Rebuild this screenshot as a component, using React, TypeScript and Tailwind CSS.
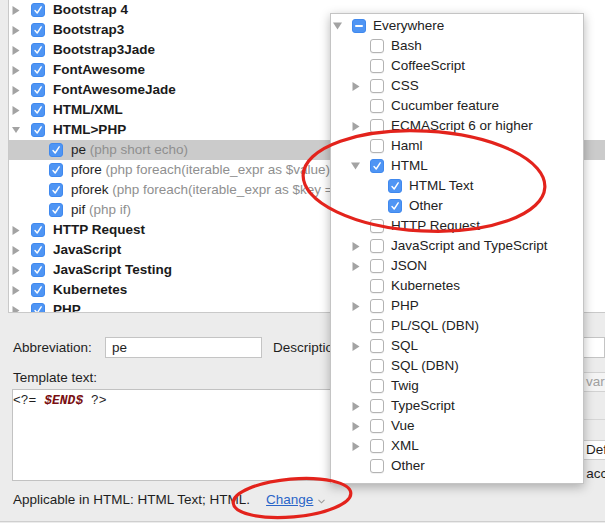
import React from "react";

type Arrow = "right" | "down" | null;

function ArrowIcon({ dir }: { dir: Arrow }) {
  if (dir === "right")
    return (
      <svg width="8" height="9" viewBox="0 0 8 9">
        <polygon points="0.5,0 7.5,4.5 0.5,9" fill="#a3a3a3" />
      </svg>
    );
  if (dir === "down")
    return (
      <svg width="9" height="8" viewBox="0 0 9 8">
        <polygon points="0,0.5 9,0.5 4.5,7.5" fill="#a3a3a3" />
      </svg>
    );
  return null;
}

function Check({ state }: { state: "on" | "off" | "mixed" }) {
  if (state === "off")
    return (
      <span className="block w-[14px] h-[14px] rounded-[3px] border border-[#b3b3b3] bg-white shadow-[0_1px_0_rgba(0,0,0,0.05)]" />
    );
  return (
    <span className="flex items-center justify-center w-[14px] h-[14px] rounded-[3px] bg-[#4f95f4] border border-[#4089ee]">
      {state === "on" ? (
        <svg width="12" height="12" viewBox="0 0 12 12">
          <polyline points="3,6.5 5.2,9 9.2,2.8" fill="none" stroke="#fff" strokeWidth="1.4" strokeLinecap="round" strokeLinejoin="round" />
        </svg>
      ) : (
        <span className="block w-[8px] h-[2px] bg-white rounded-[1px]" />
      )}
    </span>
  );
}

type TreeItem = { label: string; desc?: string; arrow: Arrow; level: number; selected?: boolean };

const tree: TreeItem[] = [
  { label: "Bootstrap 4", arrow: "right", level: 0 },
  { label: "Bootstrap3", arrow: "right", level: 0 },
  { label: "Bootstrap3Jade", arrow: "right", level: 0 },
  { label: "FontAwesome", arrow: "right", level: 0 },
  { label: "FontAwesomeJade", arrow: "right", level: 0 },
  { label: "HTML/XML", arrow: "right", level: 0 },
  { label: "HTML>PHP", arrow: "down", level: 0 },
  { label: "pe", desc: "(php short echo)", arrow: null, level: 1, selected: true },
  { label: "pfore", desc: "(php foreach(iterable_expr as $value))", arrow: null, level: 1 },
  { label: "pforek", desc: "(php foreach(iterable_expr as $key => $value))", arrow: null, level: 1 },
  { label: "pif", desc: "(php if)", arrow: null, level: 1 },
  { label: "HTTP Request", arrow: "right", level: 0 },
  { label: "JavaScript", arrow: "right", level: 0 },
  { label: "JavaScript Testing", arrow: "right", level: 0 },
  { label: "Kubernetes", arrow: "right", level: 0 },
  { label: "PHP", arrow: "right", level: 0 },
];

type PopItem = { label: string; arrow: Arrow; level: number; state: "on" | "off" | "mixed" };

const pop: PopItem[] = [
  { label: "Everywhere", arrow: "down", level: 0, state: "mixed" },
  { label: "Bash", arrow: null, level: 1, state: "off" },
  { label: "CoffeeScript", arrow: null, level: 1, state: "off" },
  { label: "CSS", arrow: "right", level: 1, state: "off" },
  { label: "Cucumber feature", arrow: null, level: 1, state: "off" },
  { label: "ECMAScript 6 or higher", arrow: "right", level: 1, state: "off" },
  { label: "Haml", arrow: null, level: 1, state: "off" },
  { label: "HTML", arrow: "down", level: 1, state: "on" },
  { label: "HTML Text", arrow: null, level: 2, state: "on" },
  { label: "Other", arrow: null, level: 2, state: "on" },
  { label: "HTTP Request", arrow: null, level: 1, state: "off" },
  { label: "JavaScript and TypeScript", arrow: "right", level: 1, state: "off" },
  { label: "JSON", arrow: "right", level: 1, state: "off" },
  { label: "Kubernetes", arrow: null, level: 1, state: "off" },
  { label: "PHP", arrow: "right", level: 1, state: "off" },
  { label: "PL/SQL (DBN)", arrow: null, level: 1, state: "off" },
  { label: "SQL", arrow: "right", level: 1, state: "off" },
  { label: "SQL (DBN)", arrow: null, level: 1, state: "off" },
  { label: "Twig", arrow: null, level: 1, state: "off" },
  { label: "TypeScript", arrow: "right", level: 1, state: "off" },
  { label: "Vue", arrow: "right", level: 1, state: "off" },
  { label: "XML", arrow: "right", level: 1, state: "off" },
  { label: "Other", arrow: null, level: 1, state: "off" },
];

export default function App() {
  return (
    <div
      className="relative w-[605px] h-[523px] overflow-hidden bg-[#ececec] text-[13.5px] text-[#1e1e1e]"
      style={{ fontFamily: '"Liberation Sans", Arial, sans-serif' }}
    >
      {/* Tree panel */}
      <div className="ml-[8px] h-[313px] overflow-hidden border-l border-b border-[#c9c9c9] bg-white">
        <div>
          {tree.map((t, i) => (
            <div
              key={i}
              className={`flex h-[20px] items-center whitespace-nowrap ${t.selected ? "bg-[#cbcbcb]" : ""}`}
              style={{ paddingLeft: 3 + t.level * 18 }}
            >
              <span className="flex w-[8px] shrink-0 items-center justify-center">
                <ArrowIcon dir={t.arrow} />
              </span>
              <span className="ml-[11px] shrink-0">
                <Check state="on" />
              </span>
              {t.level === 0 ? (
                <span className="ml-[8px] font-bold text-[#1a1a1a]">{t.label}</span>
              ) : (
                <span className="ml-[8px]">
                  <span className="text-[#1e1e1e]">{t.label}</span>{" "}
                  <span className="text-[#8f8f8f]">{t.desc}</span>
                </span>
              )}
            </div>
          ))}
        </div>
      </div>

      {/* Bottom form */}
      <div className="pl-[12px] pt-[24px]">
        <div className="flex h-[21px] items-center whitespace-nowrap pt-px">
          <span className="w-[93px] shrink-0 pl-px">Abbreviation:</span>
          <div className="-mt-px flex h-[21px] w-[157px] shrink-0 items-center border border-[#c4c4c4] bg-white pl-[6px] pt-px">pe</div>
          <span className="ml-[11px] shrink-0">Description:</span>
          <div className="-mt-px ml-[6px] h-[21px] flex-1 border border-[#c4c4c4] bg-white" />
        </div>

        <div className="flex">
          <div className="w-[480px] shrink-0">
            <div className="mt-[12px] h-[16px] pl-px leading-[16px]">Template text:</div>
            <div
              className="mt-[3px] h-[92px] border border-[#c2c2c2] bg-white pt-[3px] text-[13px] leading-[16px]"
              style={{ fontFamily: '"Liberation Mono", "Courier New", monospace' }}
            >
              <span>&lt;?= </span>
              <span className="font-bold italic text-[#7a0f12]">$END$</span>
              <span> ?&gt;</span>
            </div>
          </div>
          <div className="ml-[8px] flex-1 whitespace-nowrap">
            <div className="mt-[14px] ml-[48px] flex h-[20px] items-center border border-[#d2d2d2] bg-[#f4f4f4] pl-[10px] text-[#a0a0a0]">
              Edit variables
            </div>
            <div className="mt-[27px] border-t border-[#d6d6d6]" />
            <div className="mt-[20px] flex h-[20px] items-center">
              <span className="w-[75px] shrink-0">Expand with</span>
              <div className="flex h-[20px] flex-1 items-center border border-[#d0d0d0] bg-white pl-[10px]">
                Default
              </div>
            </div>
            <div className="mt-[4px] flex h-[20px] items-center">
              <span className="ml-[27px]">Reformat according to style</span>
            </div>
          </div>
        </div>

        <div className="mt-[8px] flex h-[16px] items-center whitespace-nowrap pl-px leading-[16px]">
          <span>Applicable in HTML: HTML Text; HTML.</span>
          <span className="ml-[16px] text-[#2a65c8] underline decoration-[#2a65c8]">Change</span>
          <svg className="ml-[5px] mt-[2px]" width="7" height="5" viewBox="0 0 7 5">
            <polyline points="0.5,0.8 3.5,3.8 6.5,0.8" fill="none" stroke="#9a9a9a" strokeWidth="1.1" />
          </svg>
        </div>
      </div>
      <div className="mt-[13px] h-px bg-[#cfcfcf]" />

      {/* Popup */}
      <div className="absolute left-[330px] top-[13px] w-[254px] border border-[#c4c4c4] bg-white pt-[2px] pb-[7px] shadow-[0_3px_10px_rgba(0,0,0,0.28)]">
        {pop.map((p, i) => (
          <div
            key={i}
            className="flex h-[20px] items-center whitespace-nowrap"
            style={{ paddingLeft: 2 + p.level * 18 }}
          >
            <span className="flex w-[9px] shrink-0 items-center justify-center">
              <ArrowIcon dir={p.arrow} />
            </span>
            <span className="ml-[10px] shrink-0">
              <Check state={p.state} />
            </span>
            <span className="ml-[7px] text-[#222]">{p.label}</span>
          </div>
        ))}
      </div>

      {/* Red annotation ellipses */}
      <svg className="pointer-events-none absolute left-0 top-0" width="605" height="523" viewBox="0 0 605 523">
        <ellipse cx="424" cy="181" rx="121" ry="50" transform="rotate(3 424 181)" fill="none" stroke="#e3231c" strokeWidth="3.2" />
        <ellipse cx="292" cy="498" rx="59" ry="19" transform="rotate(-5 292 498)" fill="none" stroke="#e3231c" strokeWidth="3.2" />
      </svg>
    </div>
  );
}
